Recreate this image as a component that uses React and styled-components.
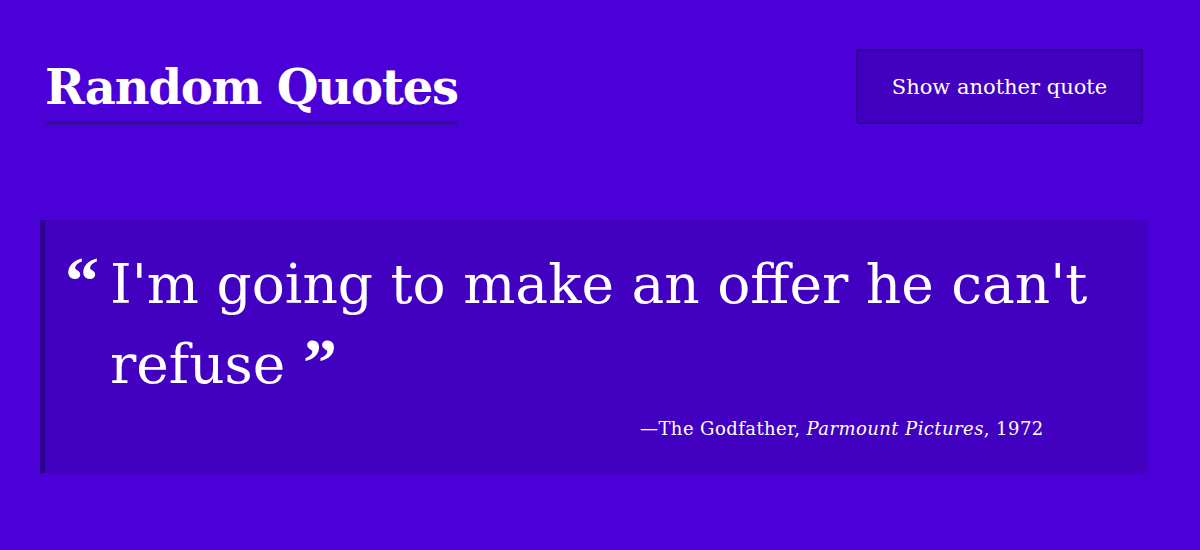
import React from "react";
import styled, { createGlobalStyle } from "styled-components";

const GlobalStyle = createGlobalStyle`
  html, body {
    margin: 0;
    padding: 0;
    background: #4b00d8;
  }
  body {
    font-family: "DejaVu Serif", "Liberation Serif", serif;
    color: #fff;
  }
`;

const Page = styled.div`
  width: 1108px;
  margin-left: 40px;
  padding-top: 49px;
`;

const Header = styled.header`
  display: flex;
  justify-content: space-between;
  align-items: flex-start;
  padding: 0 5px;
`;

const Title = styled.h1`
  margin: 0;
  font-size: 48px;
  font-weight: 700;
  line-height: 68px;
  padding-top: 4px;
  border-bottom: 4px solid #3a0aa6;
  letter-spacing: -1.2px;
`;

const Button = styled.button`
  width: 287px;
  height: 75px;
  background: #4200c0;
  border: 2px solid #3300a0;
  border-radius: 3px;
  color: #fff;
  font-family: inherit;
  font-size: 21px;
  cursor: pointer;
`;

const QuoteBox = styled.figure`
  margin: 95px 0 0;
  height: 253px;
  box-sizing: border-box;
  background: #4200c0;
  border-left: 5px solid #2e0092;
  padding: 24px 28px 0 20px;
`;

const Quote = styled.blockquote`
  margin: 0;
  display: flex;
  font-size: 55px;
  line-height: 80px;
`;

const Mark = styled.span`
  font-family: "Liberation Serif", serif;
  font-weight: 700;
  font-size: 68px;
  line-height: 0;
  vertical-align: -2px;
`;

const OpenMark = styled(Mark)`
  flex: none;
  width: 45px;
  line-height: 80px;
  vertical-align: baseline;
  margin-top: -3px;
`;

const Text = styled.p`
  margin: 0;
`;

const Cite = styled.figcaption`
  margin-top: 14px;
  padding-left: 575px;
  font-size: 18px;
  letter-spacing: 0.43px;

  i {
    font-style: italic;
  }
`;

export default function App() {
  return (
    <>
      <GlobalStyle />
      <Page>
        <Header>
          <Title>Random Quotes</Title>
          <Button>Show another quote</Button>
        </Header>
        <QuoteBox>
          <Quote>
            <OpenMark>“</OpenMark>
            <Text>
              I'm going to make an offer he can't refuse <Mark>”</Mark>
            </Text>
          </Quote>
          <Cite>
            —The Godfather, <i>Parmount Pictures</i>, 1972
          </Cite>
        </QuoteBox>
      </Page>
    </>
  );
}
